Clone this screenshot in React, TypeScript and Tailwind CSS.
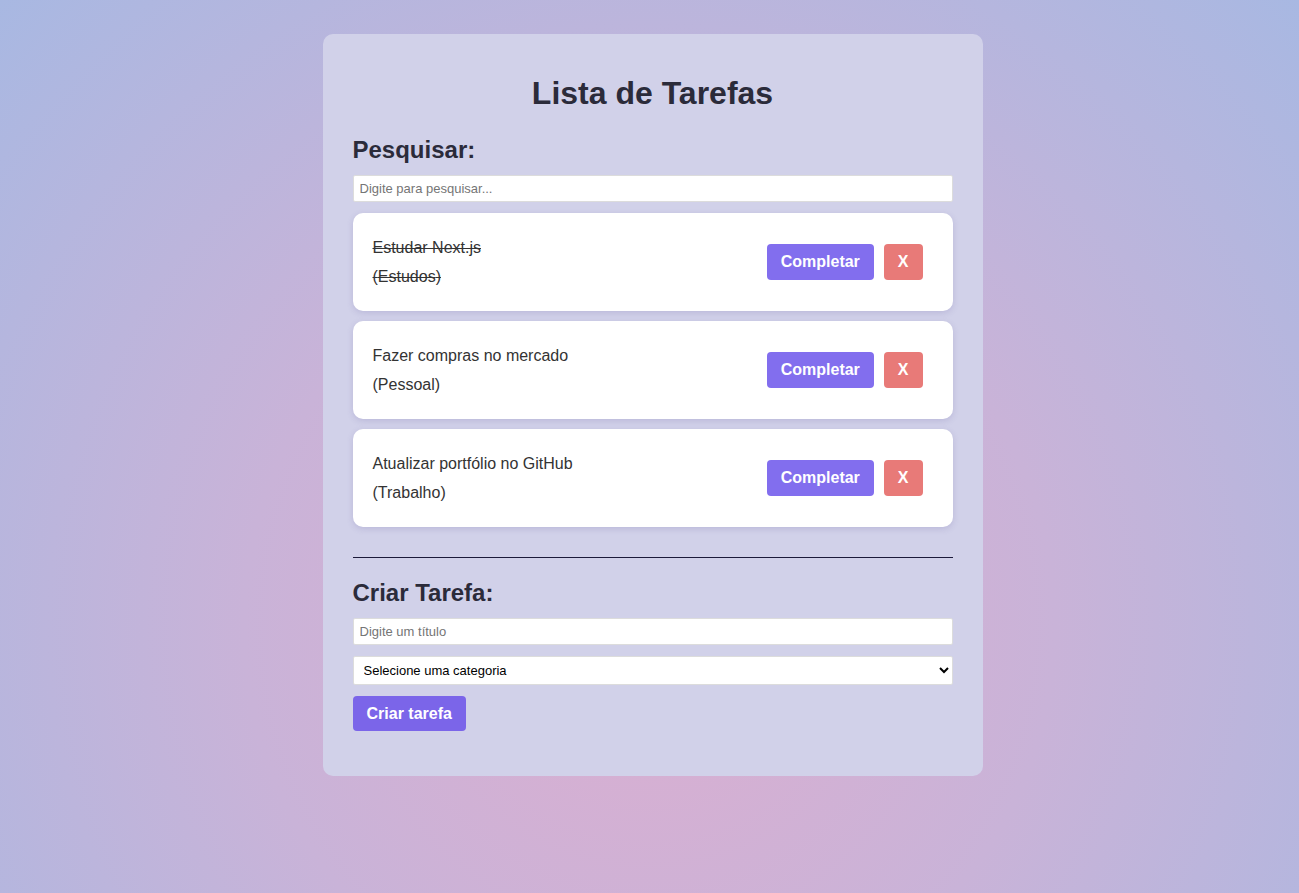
import { useState } from "react";

type Task = { id: number; title: string; category: string; done: boolean };

const initialTasks: Task[] = [
  { id: 1, title: "Estudar Next.js", category: "Estudos", done: true },
  { id: 2, title: "Fazer compras no mercado", category: "Pessoal", done: false },
  { id: 3, title: "Atualizar portfólio no GitHub", category: "Trabalho", done: false },
];

export default function App() {
  const [tasks, setTasks] = useState<Task[]>(initialTasks);
  const [search, setSearch] = useState("");

  const visible = tasks.filter((t) => t.title.toLowerCase().includes(search.toLowerCase()));

  return (
    <div className="min-h-screen w-full bg-[radial-gradient(circle_at_50%_70%,#dcaed0_0%,#c9b3d8_45%,#a8b8e2_100%)] pl-[6px] pt-[34px] pb-[117px] font-['Liberation_Sans',Arial,sans-serif]">
      <div className="mx-auto w-[660px] rounded-[10px] bg-[#d1d1e9] px-[30px] pt-[41px] pb-[45px] text-[#2b2b3a]">
        <h1 className="text-center text-[32px] font-bold leading-[37px]">Lista de Tarefas</h1>

        {/* Search */}
        <h2 className="mt-[24px] text-[24px] font-bold leading-[28px]">Pesquisar:</h2>
        <input
          type="text"
          value={search}
          onChange={(e) => setSearch(e.target.value)}
          placeholder="Digite para pesquisar..."
          className="mt-[11px] block h-[27px] w-full rounded-[2px] border border-[#dcdcdc] bg-white px-[6px] text-[13px] text-black outline-none placeholder:text-[#757575]"
        />

        {/* Task list */}
        <div className="mt-[11px] flex flex-col gap-[10px]">
          {visible.map((task) => (
            <div
              key={task.id}
              className="flex items-center justify-between rounded-[10px] bg-white py-[20px] pl-[20px] pr-[30px] shadow-[0_2px_6px_rgba(90,80,150,0.18)]"
            >
              <div className={`text-[16px] leading-[29px] text-[#333] ${task.done ? "line-through" : ""}`}>
                <p>{task.title}</p>
                <p>({task.category})</p>
              </div>
              <div className="flex gap-[10px]">
                <button
                  onClick={() =>
                    setTasks((prev) => prev.map((t) => (t.id === task.id ? { ...t, done: !t.done } : t)))
                  }
                  className="h-[36px] rounded-[4px] bg-[#826eee] px-[14px] text-[16px] font-bold text-white"
                >
                  Completar
                </button>
                <button
                  onClick={() => setTasks((prev) => prev.filter((t) => t.id !== task.id))}
                  className="h-[36px] rounded-[4px] bg-[#e87a78] px-[14px] text-[16px] font-bold text-white"
                >
                  X
                </button>
              </div>
            </div>
          ))}
        </div>

        <hr className="mt-[30px] border-0 border-t border-[#1c1a3a]" />

        {/* Create */}
        <h2 className="mt-[21px] text-[24px] font-bold leading-[28px]">Criar Tarefa:</h2>
        <input
          type="text"
          placeholder="Digite um título"
          className="mt-[11px] block h-[27px] w-full rounded-[2px] border border-[#dcdcdc] bg-white px-[6px] text-[13px] text-black outline-none placeholder:text-[#757575]"
        />
        <select
          defaultValue=""
          className="mt-[11px] block h-[29px] w-full rounded-[2px] border border-[#dcdcdc] bg-white px-[6px] text-[13px] text-black"
        >
          <option value="">Selecione uma categoria</option>
          <option value="Trabalho">Trabalho</option>
          <option value="Pessoal">Pessoal</option>
          <option value="Estudos">Estudos</option>
        </select>
        <button className="mt-[11px] h-[35px] rounded-[4px] bg-[#7b65e9] px-[14px] text-[16px] font-bold text-white">
          Criar tarefa
        </button>
      </div>
    </div>
  );
}
